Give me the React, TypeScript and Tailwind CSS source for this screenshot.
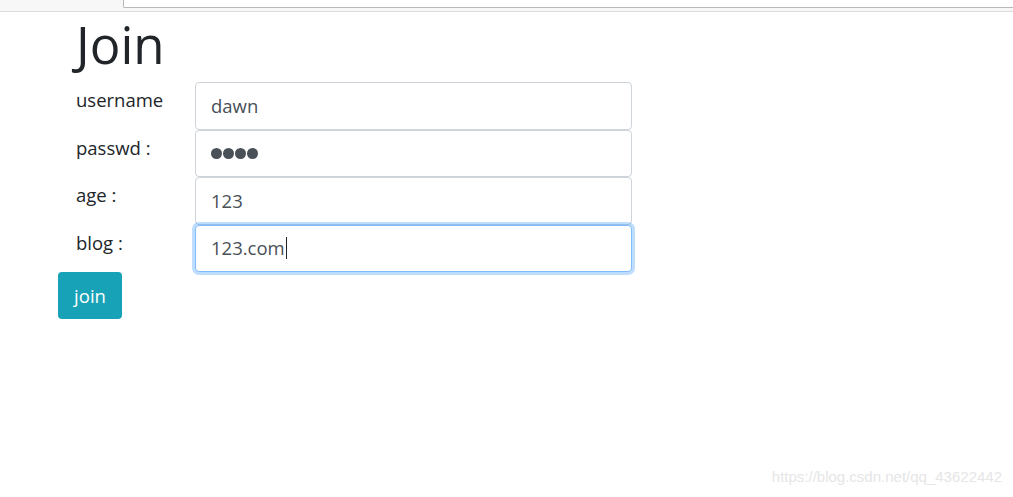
import React from 'react'

const font = { fontFamily: '"Open Sans", "Noto Sans", sans-serif' }

function Field({ label, children, focused }: { label: string; children: React.ReactNode; focused?: boolean }) {
  return (
    <div className="flex items-start">
      <label className="w-[119px] pt-[4px] text-[18.5px] leading-[27px] text-[#212529]">{label}</label>
      <div
        className={
          'flex h-[47.5px] w-[437px] items-center rounded-[4px] border bg-white pl-[15px] text-[18.5px] text-[#495057] ' +
          (focused ? 'border-[#80bdff] shadow-[0_0_0_3px_rgba(0,123,255,0.25)]' : 'border-[#ced4da]')
        }
      >
        {children}
      </div>
    </div>
  )
}

export default function App() {
  return (
    <div className="relative h-[497px] w-[1013px] overflow-hidden bg-white" style={font}>
      {/* browser chrome strip */}
      <div className="h-[12px] border-b border-[#dcdcdc] bg-[#f7f7f7]">
        <div className="ml-[123px] h-[8px] rounded-bl-[2px] border-b border-l border-[#b9b9b9] bg-white" />
      </div>

      <div className="pl-[58px]">
        <div className="pl-[18px]">
          <h1 className="mt-[2px] text-[51px] leading-[60px] text-[#212529]">Join</h1>
          <div className="mt-[8px] flex flex-col">
            <Field label="username">dawn</Field>
            <Field label="passwd :">
              <span className="flex gap-[1.5px]">
                <span className="h-[10.5px] w-[10.5px] rounded-full bg-[#495057]" />
                <span className="h-[10.5px] w-[10.5px] rounded-full bg-[#495057]" />
                <span className="h-[10.5px] w-[10.5px] rounded-full bg-[#495057]" />
                <span className="h-[10.5px] w-[10.5px] rounded-full bg-[#495057]" />
              </span>
            </Field>
            <Field label="age :">123</Field>
            <Field label="blog :" focused>
              <span>123.com</span>
              <span className="ml-[1px] h-[22px] w-px bg-[#212529]" />
            </Field>
          </div>
        </div>
        <button className="h-[47px] w-[64px] rounded-[4px] bg-[#17a2b8] text-[18.5px] text-white">join</button>
      </div>

      <div
        className="absolute bottom-[9px] right-[11px] text-[15px] text-[#e6e6e6]"
        style={{ fontFamily: '"Liberation Sans", Arial, sans-serif' }}
      >
        https://blog.csdn.net/qq_43622442
      </div>
    </div>
  )
}
